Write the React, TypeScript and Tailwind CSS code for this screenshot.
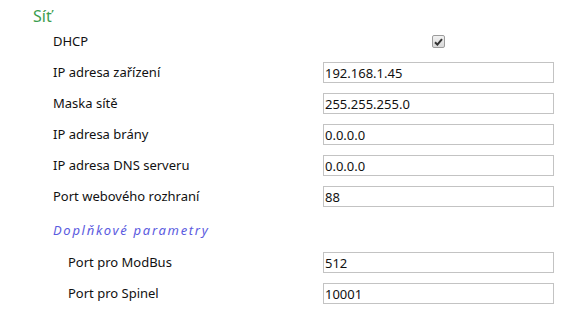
import React from 'react';

const font = { fontFamily: '"Noto Sans", "Open Sans", sans-serif' };

const Field = ({ label, value, sub }: { label: string; value: string; sub?: boolean }) => (
  <div className="flex h-[31px] items-center">
    <div className={`w-[270px] shrink-0 text-[13px] text-[#111] ${sub ? 'pl-[15px]' : ''}`}>{label}</div>
    <input
      readOnly
      value={value}
      className="h-[21px] w-[231px] border border-[#c3c3c3] bg-white px-[1px] text-[13px] text-[#111] outline-none"
    />
  </div>
);

export default function App() {
  return (
    <div className="h-[320px] w-[566px] bg-white pl-[33px]" style={font}>
      <div className="flex h-[26px] items-end pb-[2px] text-[16px] leading-none text-[#3c9d4e]">Síť</div>
      <div className="pl-[20px]">
        <div className="flex h-[31px] items-center">
          <div className="w-[270px] shrink-0 text-[13px] text-[#111]">DHCP</div>
          <div className="flex w-[231px] justify-center">
            <span className="flex h-[13px] w-[13px] items-center justify-center rounded-[2px] border border-[#9c9c9c] bg-gradient-to-b from-[#f2f2f2] to-[#d8d8d8]">
              <svg width="9" height="8" viewBox="0 0 9 8">
                <path d="M1 4.2 L3.4 6.6 L8 1.2" fill="none" stroke="#333" strokeWidth="2" />
              </svg>
            </span>
          </div>
        </div>
        <Field label="IP adresa zařízení" value="192.168.1.45" />
        <Field label="Maska sítě" value="255.255.255.0" />
        <Field label="IP adresa brány" value="0.0.0.0" />
        <Field label="IP adresa DNS serveru" value="0.0.0.0" />
        <Field label="Port webového rozhraní" value="88" />
        <div className="flex h-[35px] items-center pt-[2px] text-[13px] italic tracking-[1.7px] text-[#5b5be0]">
          Doplňkové parametry
        </div>
        <Field label="Port pro ModBus" value="512" sub />
        <Field label="Port pro Spinel" value="10001" sub />
      </div>
    </div>
  );
}
